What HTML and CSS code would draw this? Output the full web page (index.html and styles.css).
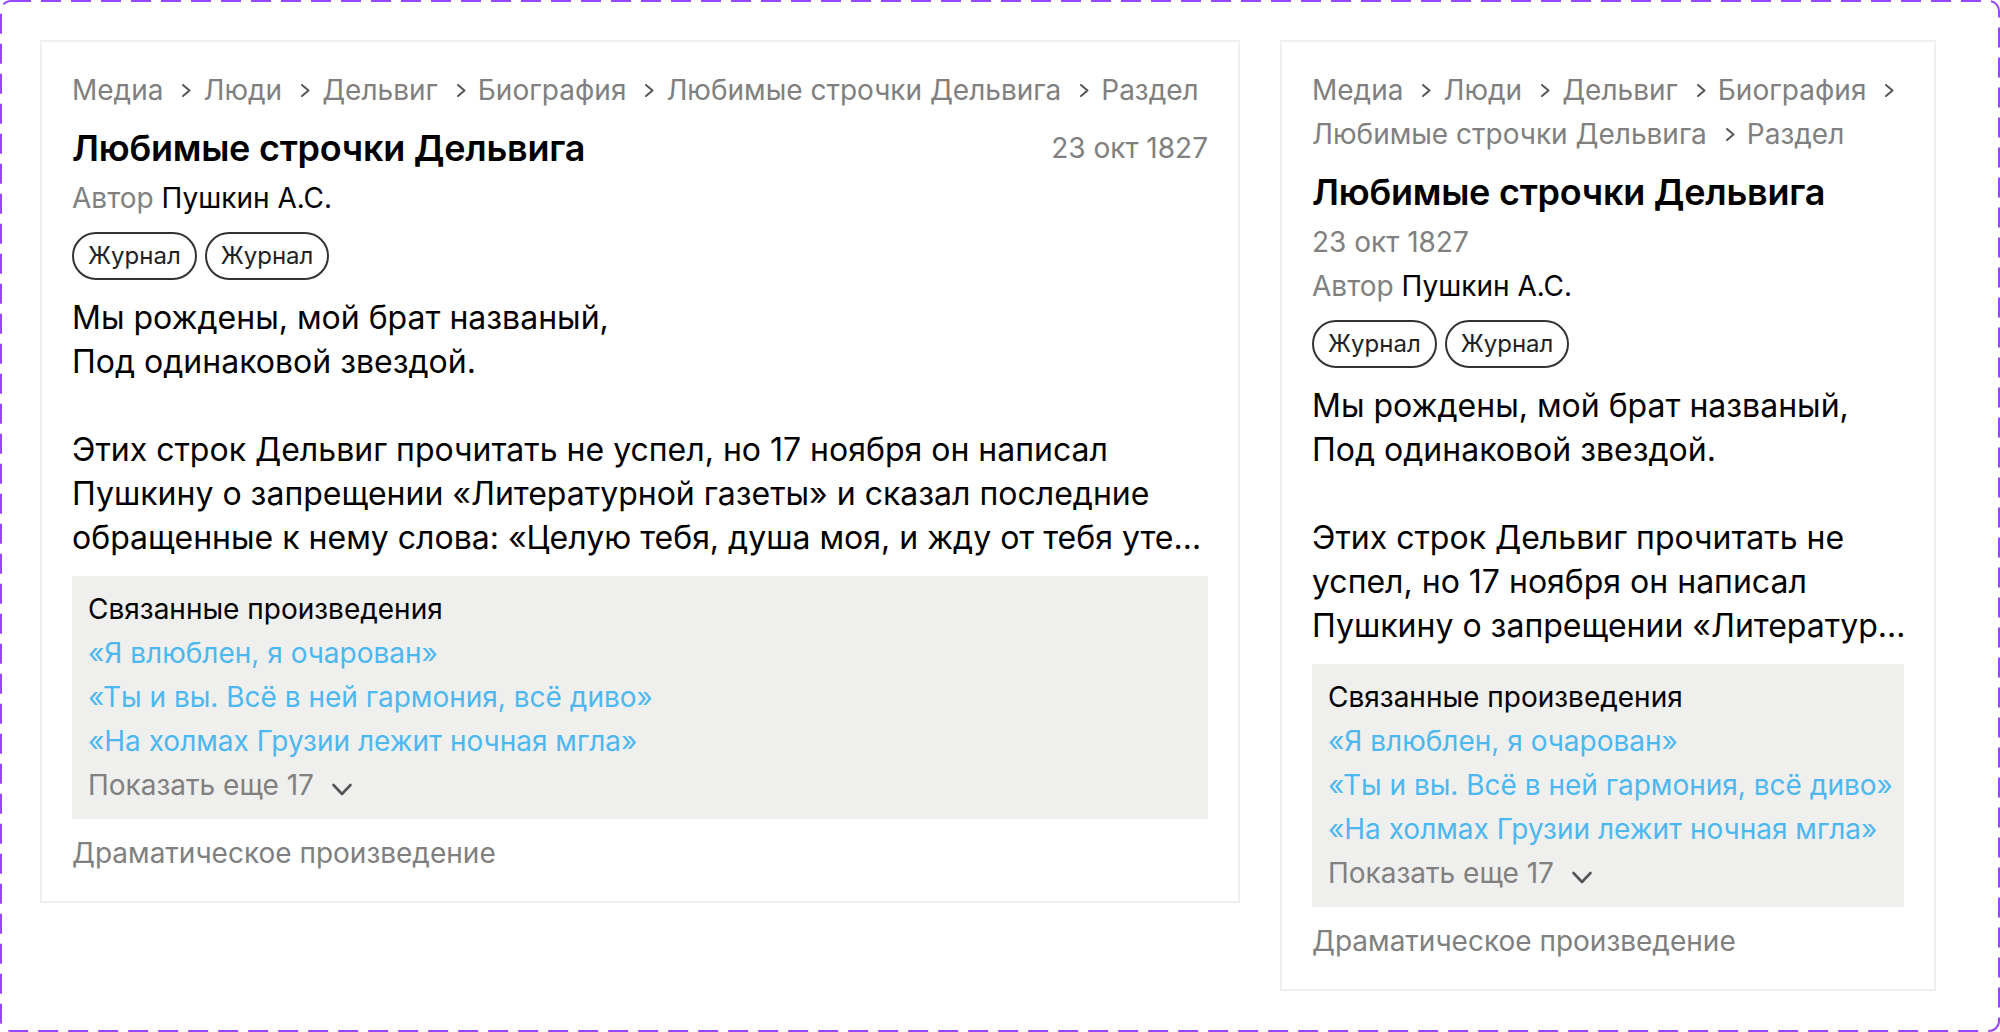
FILE: index.html
```html
<!DOCTYPE html>
<html lang="ru">
<head>
<meta charset="utf-8">
<title>Любимые строчки Дельвига</title>
<link rel="stylesheet" href="styles.css">
</head>
<body>
<div class="frame">
  <svg class="frame-border" width="2000" height="1032" viewBox="0 0 2000 1032" aria-hidden="true">
    <rect x="1" y="1" width="1998" height="1030" rx="10" ry="10" fill="none" stroke="#9747FF" stroke-width="2" stroke-dasharray="20 10"/>
  </svg>

  <article class="card card-wide">
    <nav class="crumbs">
      <span class="crumb">Медиа<svg class="sep" viewBox="0 0 24 24"><path d="M12 7l6.5 5.5L12 18"/></svg></span>
      <span class="crumb">Люди<svg class="sep" viewBox="0 0 24 24"><path d="M12 7l6.5 5.5L12 18"/></svg></span>
      <span class="crumb">Дельвиг<svg class="sep" viewBox="0 0 24 24"><path d="M12 7l6.5 5.5L12 18"/></svg></span>
      <span class="crumb">Биография<svg class="sep" viewBox="0 0 24 24"><path d="M12 7l6.5 5.5L12 18"/></svg></span>
      <span class="crumb">Любимые строчки Дельвига<svg class="sep" viewBox="0 0 24 24"><path d="M12 7l6.5 5.5L12 18"/></svg></span>
      <span class="crumb">Раздел</span>
    </nav>
    <header class="head">
      <div class="title-row">
        <h1 class="title">Любимые строчки Дельвига</h1>
        <time class="date">23 окт 1827</time>
      </div>
      <div class="author"><span class="muted">Автор</span> Пушкин А.С.</div>
    </header>
    <div class="tags"><span class="tag">Журнал</span><span class="tag">Журнал</span></div>
    <div class="excerpt">
      <p class="verse">Мы рождены, мой брат названый,<br>Под одинаковой звездой.</p>
      <p class="prose">Этих строк Дельвиг прочитать не успел, но 17 ноября он написал<br>Пушкину о запрещении «Литературной газеты» и сказал последние<br>обращенные к нему слова: «Целую тебя, душа моя, и жду от тебя уте…</p>
    </div>
    <section class="related">
      <div class="related-title">Связанные произведения</div>
      <a class="work" href="#">«Я влюблен, я очарован»</a>
      <a class="work" href="#">«Ты и вы. Всё в ней гармония, всё диво»</a>
      <a class="work" href="#">«На холмах Грузии лежит ночная мгла»</a>
      <div class="more">Показать еще 17<svg class="more-icon" viewBox="0 0 32 32"><path d="M7.5 16l8.5 9 8.5-9"/></svg></div>
    </section>
    <div class="genre">Драматическое произведение</div>
  </article>

  <article class="card card-narrow">
    <nav class="crumbs">
      <span class="crumb">Медиа<svg class="sep" viewBox="0 0 24 24"><path d="M12 7l6.5 5.5L12 18"/></svg></span>
      <span class="crumb">Люди<svg class="sep" viewBox="0 0 24 24"><path d="M12 7l6.5 5.5L12 18"/></svg></span>
      <span class="crumb">Дельвиг<svg class="sep" viewBox="0 0 24 24"><path d="M12 7l6.5 5.5L12 18"/></svg></span>
      <span class="crumb">Биография<svg class="sep" viewBox="0 0 24 24"><path d="M12 7l6.5 5.5L12 18"/></svg></span>
      <span class="crumb">Любимые строчки Дельвига<svg class="sep" viewBox="0 0 24 24"><path d="M12 7l6.5 5.5L12 18"/></svg></span>
      <span class="crumb">Раздел</span>
    </nav>
    <header class="head">
      <h1 class="title">Любимые строчки Дельвига</h1>
      <time class="date">23 окт 1827</time>
      <div class="author"><span class="muted">Автор</span> Пушкин А.С.</div>
    </header>
    <div class="tags"><span class="tag">Журнал</span><span class="tag">Журнал</span></div>
    <div class="excerpt">
      <p class="verse">Мы рождены, мой брат названый,<br>Под одинаковой звездой.</p>
      <p class="prose">Этих строк Дельвиг прочитать не<br>успел, но 17 ноября он написал<br>Пушкину о запрещении «Литератур…</p>
    </div>
    <section class="related">
      <div class="related-title">Связанные произведения</div>
      <a class="work" href="#">«Я влюблен, я очарован»</a>
      <a class="work" href="#">«Ты и вы. Всё в ней гармония, всё диво»</a>
      <a class="work" href="#">«На холмах Грузии лежит ночная мгла»</a>
      <div class="more">Показать еще 17<svg class="more-icon" viewBox="0 0 32 32"><path d="M7.5 16l8.5 9 8.5-9"/></svg></div>
    </section>
    <div class="genre">Драматическое произведение</div>
  </article>
</div>
</body>
</html>
```

FILE: styles.css
```css
* { box-sizing: border-box; }

html, body {
  margin: 0;
  padding: 0;
  background: #ffffff;
}

body {
  font-family: "Inter", "Noto Sans", "Liberation Sans", sans-serif;
  font-optical-sizing: none;
  color: #000000;
}

.frame {
  position: relative;
  width: 2000px;
  height: 1032px;
  padding: 40px;
  display: flex;
  align-items: flex-start;
  gap: 40px;
}

.frame-border {
  position: absolute;
  left: 0;
  top: 0;
  pointer-events: none;
}

.card {
  background: #ffffff;
  border: 2px solid #efefef;
  padding: 30px;
  display: flex;
  flex-direction: column;
  gap: 16px;
}

.card-wide { width: 1200px; }
.card-narrow { width: 656px; }

/* breadcrumbs */
.crumbs {
  display: flex;
  flex-wrap: wrap;
  row-gap: 8px;
  column-gap: 8px;
  font-size: 28px;
  line-height: 36px;
  color: #808080;
}

.crumb {
  display: inline-flex;
  align-items: center;
  gap: 8px;
  white-space: nowrap;
}

.sep {
  width: 24px;
  height: 24px;
  flex: none;
}

.sep path {
  fill: none;
  stroke: #555555;
  stroke-width: 2;
  stroke-linecap: round;
  stroke-linejoin: round;
}

/* header */
.head {
  display: flex;
  flex-direction: column;
  gap: 8px;
}

.title-row {
  display: flex;
  justify-content: space-between;
  align-items: center;
}

.title {
  margin: 0;
  font-size: 36px;
  line-height: 48px;
  font-weight: 600;
  letter-spacing: -0.25px;
  color: #000000;
}

.date {
  display: block;
  font-size: 28px;
  line-height: 36px;
  color: #808080;
}

.author {
  font-size: 28px;
  line-height: 36px;
  color: #000000;
}

.muted { color: #808080; }

/* tags */
.tags {
  display: flex;
  gap: 8px;
}

.tag {
  display: inline-block;
  border: 2px solid #333333;
  border-radius: 999px;
  padding: 7px 14px;
  font-size: 24px;
  line-height: 30px;
  color: #222222;
}

/* excerpt */
.excerpt {
  font-size: 32px;
  line-height: 44px;
  color: #000000;
}

.excerpt p {
  margin: 0;
  white-space: nowrap;
}

.excerpt .verse { margin-bottom: 44px; }

/* related works */
.related {
  background: #efefed;
  padding: 11px 16px 12px;
  display: flex;
  flex-direction: column;
  font-size: 28px;
  line-height: 44px;
  white-space: nowrap;
}

.related-title { color: #000000; }

.work {
  color: #4db8ef;
  text-decoration: none;
}

.more {
  display: flex;
  align-items: center;
  gap: 12px;
  color: #808080;
}

.more-icon {
  width: 32px;
  height: 32px;
  flex: none;
}

.more-icon path {
  fill: none;
  stroke: #555555;
  stroke-width: 2.6;
  stroke-linecap: round;
  stroke-linejoin: round;
}

.genre {
  font-size: 28px;
  line-height: 36px;
  color: #808080;
}
```
